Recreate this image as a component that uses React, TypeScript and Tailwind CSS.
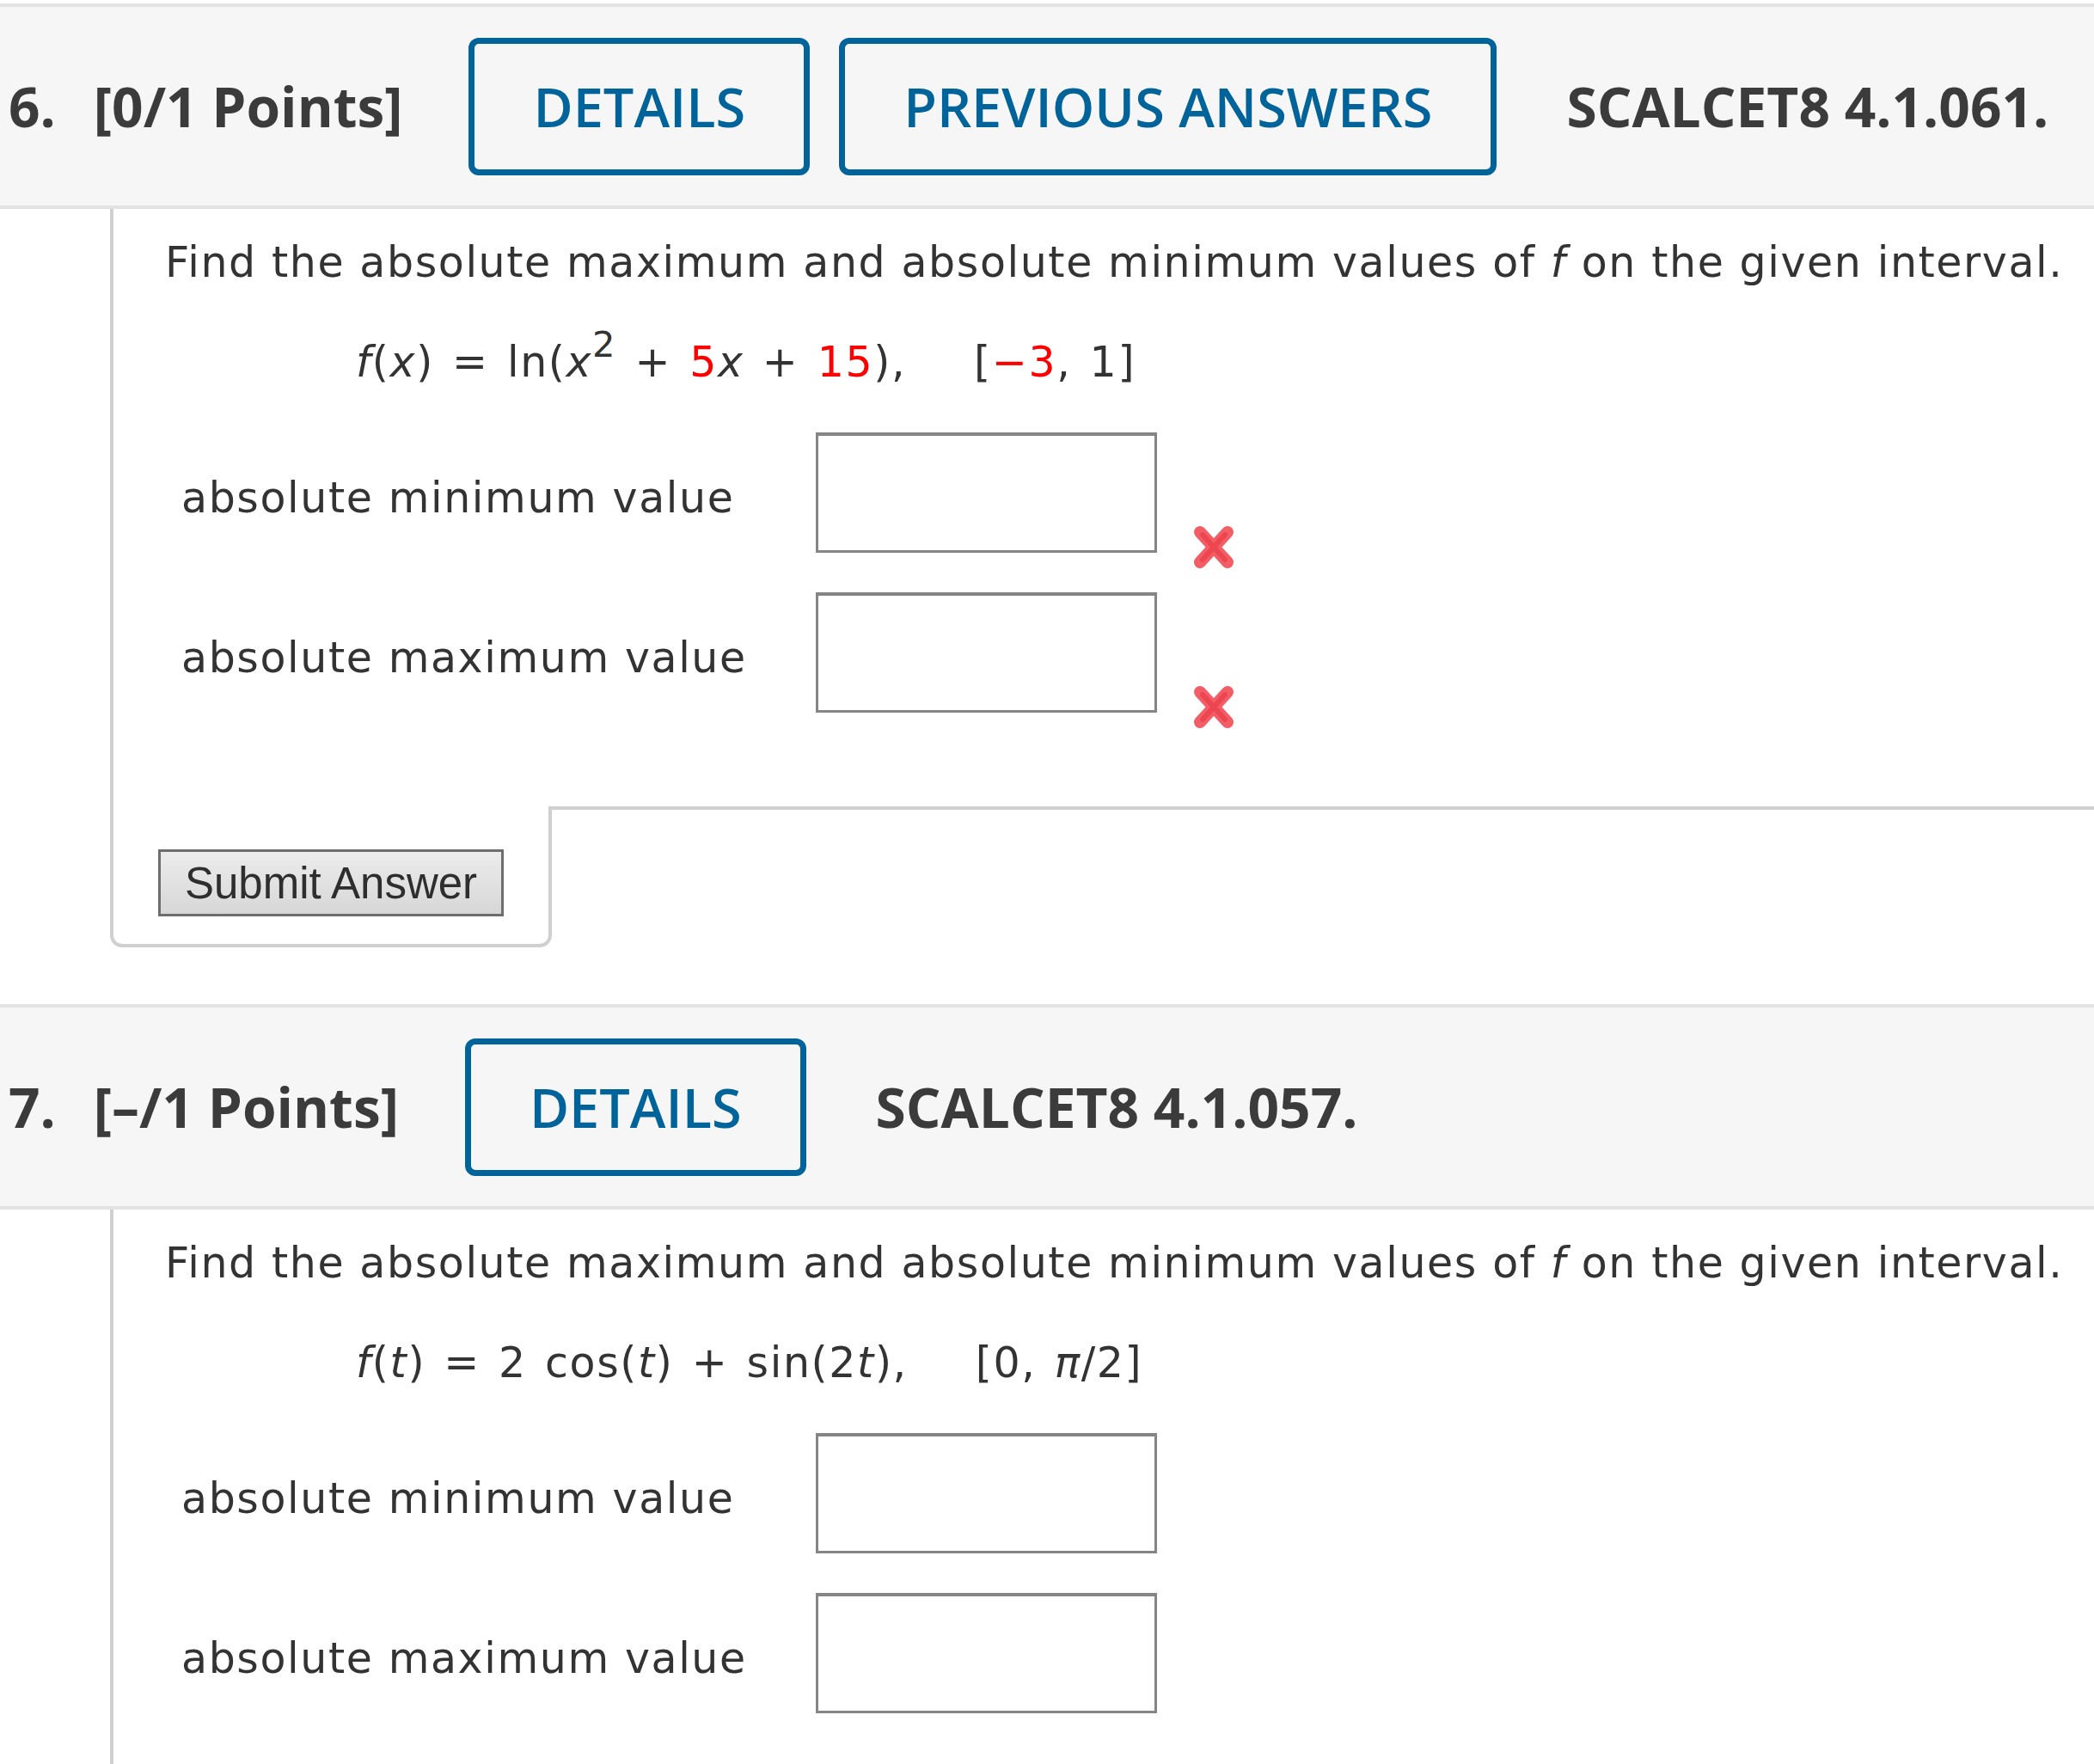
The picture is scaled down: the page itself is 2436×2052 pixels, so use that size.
import React from 'react';

type HeaderProps = {
  num: number;
  points: string;
  buttons: string[];
  code: string;
};

function QuestionHeader({ num, points, buttons, code }: HeaderProps) {
  return (
    <div className="flex h-[239px] items-center border-y-4 border-[#e3e3e3] bg-[#f6f6f6] pl-[10px] [font-family:Open_Sans,sans-serif] text-[64px] text-[#3b3b3b]">
      <span className="font-bold">{num}.</span>
      <span className="ml-[44px] font-bold">[{points} Points]</span>
      <div className="ml-[77px] flex gap-[34px]">
        {buttons.map((b) => (
          <button
            key={b}
            className="h-[160px] rounded-[12px] border-[7px] border-[#00639a] px-[68px] text-[63px] font-semibold leading-none text-[#00639a]"
          >
            {b}
          </button>
        ))}
      </div>
      <span className="ml-[81px] font-bold">{code}</span>
    </div>
  );
}

function WrongMark() {
  return (
    <svg width="52" height="55" viewBox="0 0 52 55" className="absolute left-[calc(100%+40px)] top-[106px]">
      <g stroke="#f25d66" strokeWidth="14" strokeLinecap="round">
        <line x1="10" y1="10" x2="42" y2="45" />
        <line x1="42" y1="10" x2="10" y2="45" />
      </g>
      <g stroke="#e9353f" strokeWidth="6" strokeLinecap="round" opacity="0.55">
        <line x1="13" y1="13" x2="39" y2="42" />
        <line x1="39" y1="13" x2="13" y2="42" />
      </g>
    </svg>
  );
}

function AnswerRow({ label, wrong }: { label: string; wrong?: boolean }) {
  return (
    <div className="flex">
      <div className="mt-[47px] w-[738px]">{label}</div>
      <div className="relative">
        <input className="block h-[140px] w-[397px] border-[3px] border-t-4 border-[#858585] bg-white outline-none" />
        {wrong && <WrongMark />}
      </div>
    </div>
  );
}

const red = 'text-[#ff0000]';
const body = '[font-family:DejaVu_Sans,Verdana,sans-serif] text-[49px] leading-[60px] tracking-[1.6px] text-[#333]';
const formula = 'mt-[56px] whitespace-nowrap pl-[222px] [word-spacing:4px]';

export default function App() {
  return (
    <div className="min-h-[2052px] overflow-hidden bg-white pt-[4px]">
      {/* question 6 */}
      <QuestionHeader num={6} points="0/1" buttons={['DETAILS', 'PREVIOUS ANSWERS']} code="SCALCET8 4.1.061." />
      <div className={`ml-[128px] ${body}`}>
        <div className="border-b-4 border-l-4 border-[#d0d0d0] pb-[109px] pl-[60px] pt-[33px]">
          <p className="whitespace-nowrap">
            Find the absolute maximum and absolute minimum values of <i>f</i> on the given interval.
          </p>
          <p className={formula}>
            <i>f</i>(<i>x</i>) = ln(<i>x</i>
            <sup className="-top-[0.55em] text-[85%]">2</sup> + <span className={red}>5</span>
            <i>x</i> + <span className={red}>15</span>),
            <span className="ml-[79px]">
              [<span className={red}>−3</span>, 1]
            </span>
          </p>
          <div className="mt-[51px] flex flex-col gap-[46px] pl-[19px]">
            <AnswerRow label="absolute minimum value" wrong />
            <AnswerRow label="absolute maximum value" wrong />
          </div>
        </div>
        <div className="-mt-[4px] w-[514px] rounded-b-[14px] border-x-4 border-b-4 border-[#d0d0d0] bg-white pb-[32px] pl-[52px] pt-[50px]">
          <button className="flex h-[78px] w-[402px] items-center justify-center border-[3px] border-[#6e6e6e] bg-gradient-to-b from-[#ececec] to-[#d7d7d7] [font-family:Liberation_Sans,Arial,sans-serif] text-[51px] leading-none tracking-normal text-[#2e2e2e]">
            Submit Answer
          </button>
        </div>
      </div>

      {/* question 7 */}
      <div className="mt-[66px]">
        <QuestionHeader num={7} points="–/1" buttons={['DETAILS']} code="SCALCET8 4.1.057." />
      </div>
      <div className={`ml-[128px] border-l-4 border-[#d0d0d0] pb-[113px] pl-[60px] pt-[33px] ${body}`}>
        <p className="whitespace-nowrap">
          Find the absolute maximum and absolute minimum values of <i>f</i> on the given interval.
        </p>
        <p className={formula}>
          <i>f</i>(<i>t</i>) = 2 cos(<i>t</i>) + sin(2<i>t</i>),
          <span className="ml-[79px]">
            [0, <i>π</i>/2]
          </span>
        </p>
        <div className="mt-[51px] flex flex-col gap-[46px] pl-[19px]">
          <AnswerRow label="absolute minimum value" />
          <AnswerRow label="absolute maximum value" />
        </div>
      </div>
    </div>
  );
}
